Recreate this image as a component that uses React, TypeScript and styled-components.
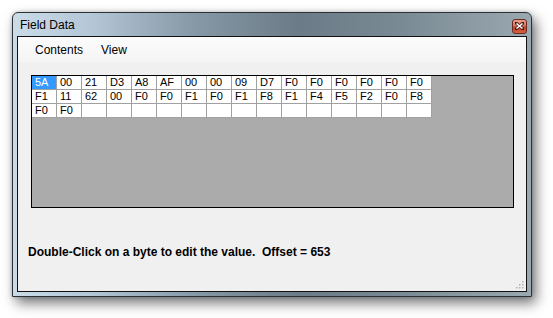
import React from "react";
import styled, { createGlobalStyle } from "styled-components";

const Global = createGlobalStyle`
  html, body { margin: 0; padding: 0; background: #ffffff; }
  body { width: 553px; height: 318px; overflow: hidden; }
`;

const Page = styled.div`
  padding: 12px 0 0 12px;
`;

const Window = styled.div`
  width: 520px;
  height: 285px;
  box-sizing: border-box;
  border: 1px solid #2c3338;
  border-radius: 6px 6px 0 0;
  background: linear-gradient(
    to right,
    #cbdbe8 0%,
    #b4c7d6 15%,
    #8798a6 35%,
    #6b7b87 55%,
    #7a8a94 75%,
    #9aa8b0 100%
  );
  box-shadow: 4px 6px 13px rgba(0, 0, 0, 0.55), 0 0 4px rgba(0, 0, 0, 0.2);
  display: flex;
  flex-direction: column;
  padding: 0 4px 4px 4px;
`;

const TitleBar = styled.div`
  height: 23px;
  display: flex;
  align-items: center;
  justify-content: space-between;
  padding: 0 0 0 3px;
`;

const Title = styled.span`
  font-family: "Liberation Sans", Arial, sans-serif;
  font-size: 12px;
  color: #000;
`;

const CloseButton = styled.div`
  width: 15px;
  height: 15px;
  margin-top: 3px;
  box-sizing: border-box;
  border: 1px solid #6b2a22;
  border-radius: 3px;
  background: linear-gradient(to bottom, #e9a18f 0%, #d5705a 45%, #c0412a 55%, #d8603e 100%);
  display: flex;
  align-items: center;
  justify-content: center;
`;

const Client = styled.div`
  flex: 1;
  border: 1px solid #111;
  background: #f0f0f0;
  display: flex;
  flex-direction: column;
`;

const MenuBar = styled.div`
  height: 25px;
  background: linear-gradient(to bottom, #fbfbfb, #f5f5f5);
  display: flex;
  align-items: center;
  padding-left: 10px;
`;

const MenuItem = styled.span<{ $gap?: number }>`
  font-family: "Liberation Sans", Arial, sans-serif;
  font-size: 12px;
  color: #000;
  padding: 0 7px;
  margin-left: ${(p) => p.$gap ?? 0}px;
`;

const PanelArea = styled.div`
  padding: 13px 12px 0 13px;
`;

const Panel = styled.div`
  height: 133px;
  box-sizing: border-box;
  border: 1px solid #000;
  background: #ababab;
`;

const Grid = styled.div`
  display: grid;
  grid-template-columns: repeat(16, 25px);
  grid-auto-rows: 14px;
  width: 400px;
`;

const Cell = styled.div<{ $selected?: boolean }>`
  box-sizing: border-box;
  border-right: 1px solid #a0a0a0;
  border-bottom: 1px solid #a0a0a0;
  background: ${(p) => (p.$selected ? "#3399ff" : "#ffffff")};
  color: ${(p) => (p.$selected ? "#ffffff" : "#000000")};
  font-family: "Liberation Sans", Arial, sans-serif;
  font-size: 11px;
  line-height: 13px;
  padding-left: 3px;
  white-space: nowrap;
`;

const Status = styled.div`
  margin-top: 37px;
  padding-left: 10px;
  font-family: "Liberation Sans", Arial, sans-serif;
  font-weight: bold;
  font-size: 12px;
  line-height: 15px;
  color: #000;
  white-space: pre;
  flex: 1;
`;

const GripRow = styled.div`
  display: flex;
  justify-content: flex-end;
  padding: 0 2px 2px 0;
`;

const rows: string[][] = [
  ["5A", "00", "21", "D3", "A8", "AF", "00", "00", "09", "D7", "F0", "F0", "F0", "F0", "F0", "F0"],
  ["F1", "11", "62", "00", "F0", "F0", "F1", "F0", "F1", "F8", "F1", "F4", "F5", "F2", "F0", "F8"],
  ["F0", "F0", "", "", "", "", "", "", "", "", "", "", "", "", "", ""],
];

export default function App() {
  return (
    <>
      <Global />
      <Page>
        <Window>
          <TitleBar>
            <Title>Field Data</Title>
            <CloseButton>
              <svg width="9" height="8" viewBox="0 0 9 8">
                <path d="M1 1 L8 7 M8 1 L1 7" stroke="#4a1a12" strokeWidth="3" strokeLinecap="square" />
                <path d="M1.5 1.5 L7.5 6.5 M7.5 1.5 L1.5 6.5" stroke="#ffffff" strokeWidth="1.6" />
              </svg>
            </CloseButton>
          </TitleBar>
          <Client>
            <MenuBar>
              <MenuItem>Contents</MenuItem>
              <MenuItem $gap={4}>View</MenuItem>
            </MenuBar>
            <PanelArea>
              <Panel>
                <Grid>
                  {rows.flatMap((r, ri) =>
                    r.map((v, ci) => (
                      <Cell key={`${ri}-${ci}`} $selected={ri === 0 && ci === 0}>
                        {v}
                      </Cell>
                    ))
                  )}
                </Grid>
              </Panel>
            </PanelArea>
            <Status>{"Double-Click on a byte to edit the value.  Offset = 653"}</Status>
            <GripRow>
              <svg width="9" height="9" viewBox="0 0 9 9">
                {[
                  [7, 1],
                  [7, 4],
                  [4, 4],
                  [7, 7],
                  [4, 7],
                  [1, 7],
                ].map(([x, y], i) => (
                  <rect key={i} x={x} y={y} width="1.5" height="1.5" fill="#b0b0b0" />
                ))}
              </svg>
            </GripRow>
          </Client>
        </Window>
      </Page>
    </>
  );
}
